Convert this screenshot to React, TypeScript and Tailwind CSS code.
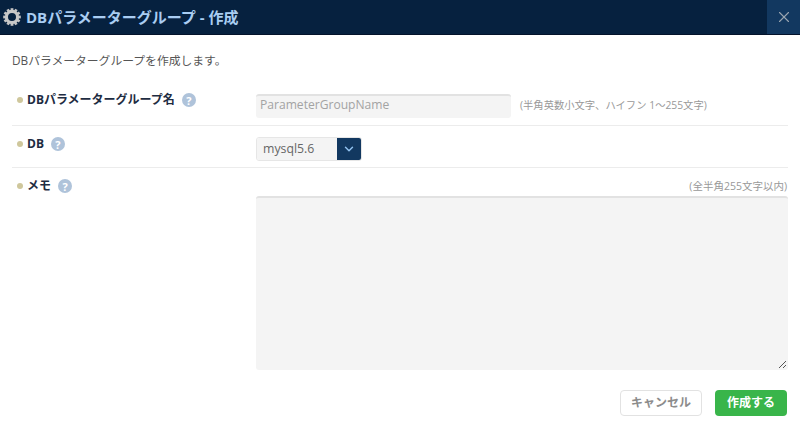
import { ChevronDown, X } from "lucide-react";

const font = { fontFamily: '"Open Sans", "Noto Sans CJK JP", sans-serif' };

function Gear() {
  const teeth = Array.from({ length: 12 }, (_, i) => i * 30);
  return (
    <svg width="18" height="18" viewBox="0 0 18 18" className="shrink-0">
      {teeth.map((a) => (
        <rect key={a} x="7.6" y="0.2" width="2.8" height="4" fill="#c4c4c4" transform={`rotate(${a} 9 9)`} />
      ))}
      <circle cx="9" cy="9" r="5.6" fill="none" stroke="#c8c8c8" strokeWidth="3.2" />
    </svg>
  );
}

function Help() {
  return (
    <span className="flex h-[14px] w-[14px] items-center justify-center rounded-full bg-[#afc3da] text-[11px] font-bold leading-none text-white">
      ?
    </span>
  );
}

function Label({ text }: { text: string }) {
  return (
    <div className="flex w-[244px] shrink-0 items-center pl-[5px]">
      <span className="mr-[4px] h-[6px] w-[6px] rounded-full bg-[#cfc79c]" />
      <span className="text-[12px] font-bold leading-[18px] text-[#1e2c42]">{text}</span>
      <span className="ml-[7px]"><Help /></span>
    </div>
  );
}

export default function App() {
  return (
    <div className="h-[436px] w-[800px] overflow-hidden bg-white" style={font}>
      <header className="flex h-[35px] items-stretch justify-between border-b border-[#04132b] bg-[#06213f]">
        <div className="flex items-center pl-[3px]">
          <Gear />
          <h1 className="ml-[5px] text-[15px] font-bold text-[#a9cdf2]">DBパラメーターグループ - 作成</h1>
        </div>
        <div className="flex w-[33px] items-center justify-center bg-[#123860]">
          <X size={18} strokeWidth={1.5} className="text-[#9aa5b1]" />
        </div>
      </header>

      <p className="px-[12px] pt-[16px] text-[11.8px] leading-[18px] text-[#555]">DBパラメーターグループを作成します。</p>

      <div className="mx-[12px] mt-[16px]">
        <div className="flex h-[41px] items-start border-b border-[#ececec] pt-[6px]">
          <Label text="DBパラメーターグループ名" />
          <div className="mt-[3px] flex items-center">
            <div className="flex h-[24px] w-[255px] items-center rounded-[3px] border-t-2 border-[#e2e2e2] bg-[#f4f4f4] px-[4px] pb-[3px] text-[12.1px] text-[#a3a3a3]">ParameterGroupName</div>
            <span className="ml-[9px] text-[10.3px] text-[#999]">(半角英数小文字、ハイフン 1～255文字)</span>
          </div>
        </div>

        <div className="flex h-[42px] items-start border-b border-[#ececec] pt-[9px]">
          <Label text="DB" />
          <div className="mt-[2px] flex h-[24px] w-[106px] overflow-hidden rounded-[3px] border border-[#e6e6e6]">
            <div className="flex flex-1 items-center bg-[#f4f4f4] pl-[6px] text-[12.3px] text-[#666]">mysql5.6</div>
            <div className="flex w-[24px] items-center justify-center bg-[#123860]">
              <ChevronDown size={14} strokeWidth={2.5} className="text-[#8fc0ee]" />
            </div>
          </div>
        </div>

        <div className="flex pt-[8px]">
          <div className="mt-[1px]"><Label text="メモ" /></div>
          <div className="flex flex-1 flex-col items-end">
            <span className="pr-[1px] text-[10.5px] leading-[20px] text-[#999]">(全半角255文字以内)</span>
            <div className="relative h-[174px] w-full rounded-[3px] border-t-2 border-[#e2e2e2] bg-[#f4f4f4]">
              <svg width="9" height="9" viewBox="0 0 9 9" className="absolute bottom-[1px] right-[1px]">
                <path d="M1 8 8 1M5 8 8 5" stroke="#555" strokeWidth="1" />
              </svg>
            </div>
          </div>
        </div>
      </div>

      <div className="mr-[13px] mt-[20px] flex justify-end gap-[13px]">
        <button className="h-[26px] w-[82px] rounded-[4px] border border-[#e2e2e2] bg-white text-[12px] font-bold text-[#8c8c8c]">キャンセル</button>
        <button className="h-[26px] w-[72px] rounded-[4px] bg-[#39b54a] text-[12px] font-bold text-white">作成する</button>
      </div>
    </div>
  );
}
